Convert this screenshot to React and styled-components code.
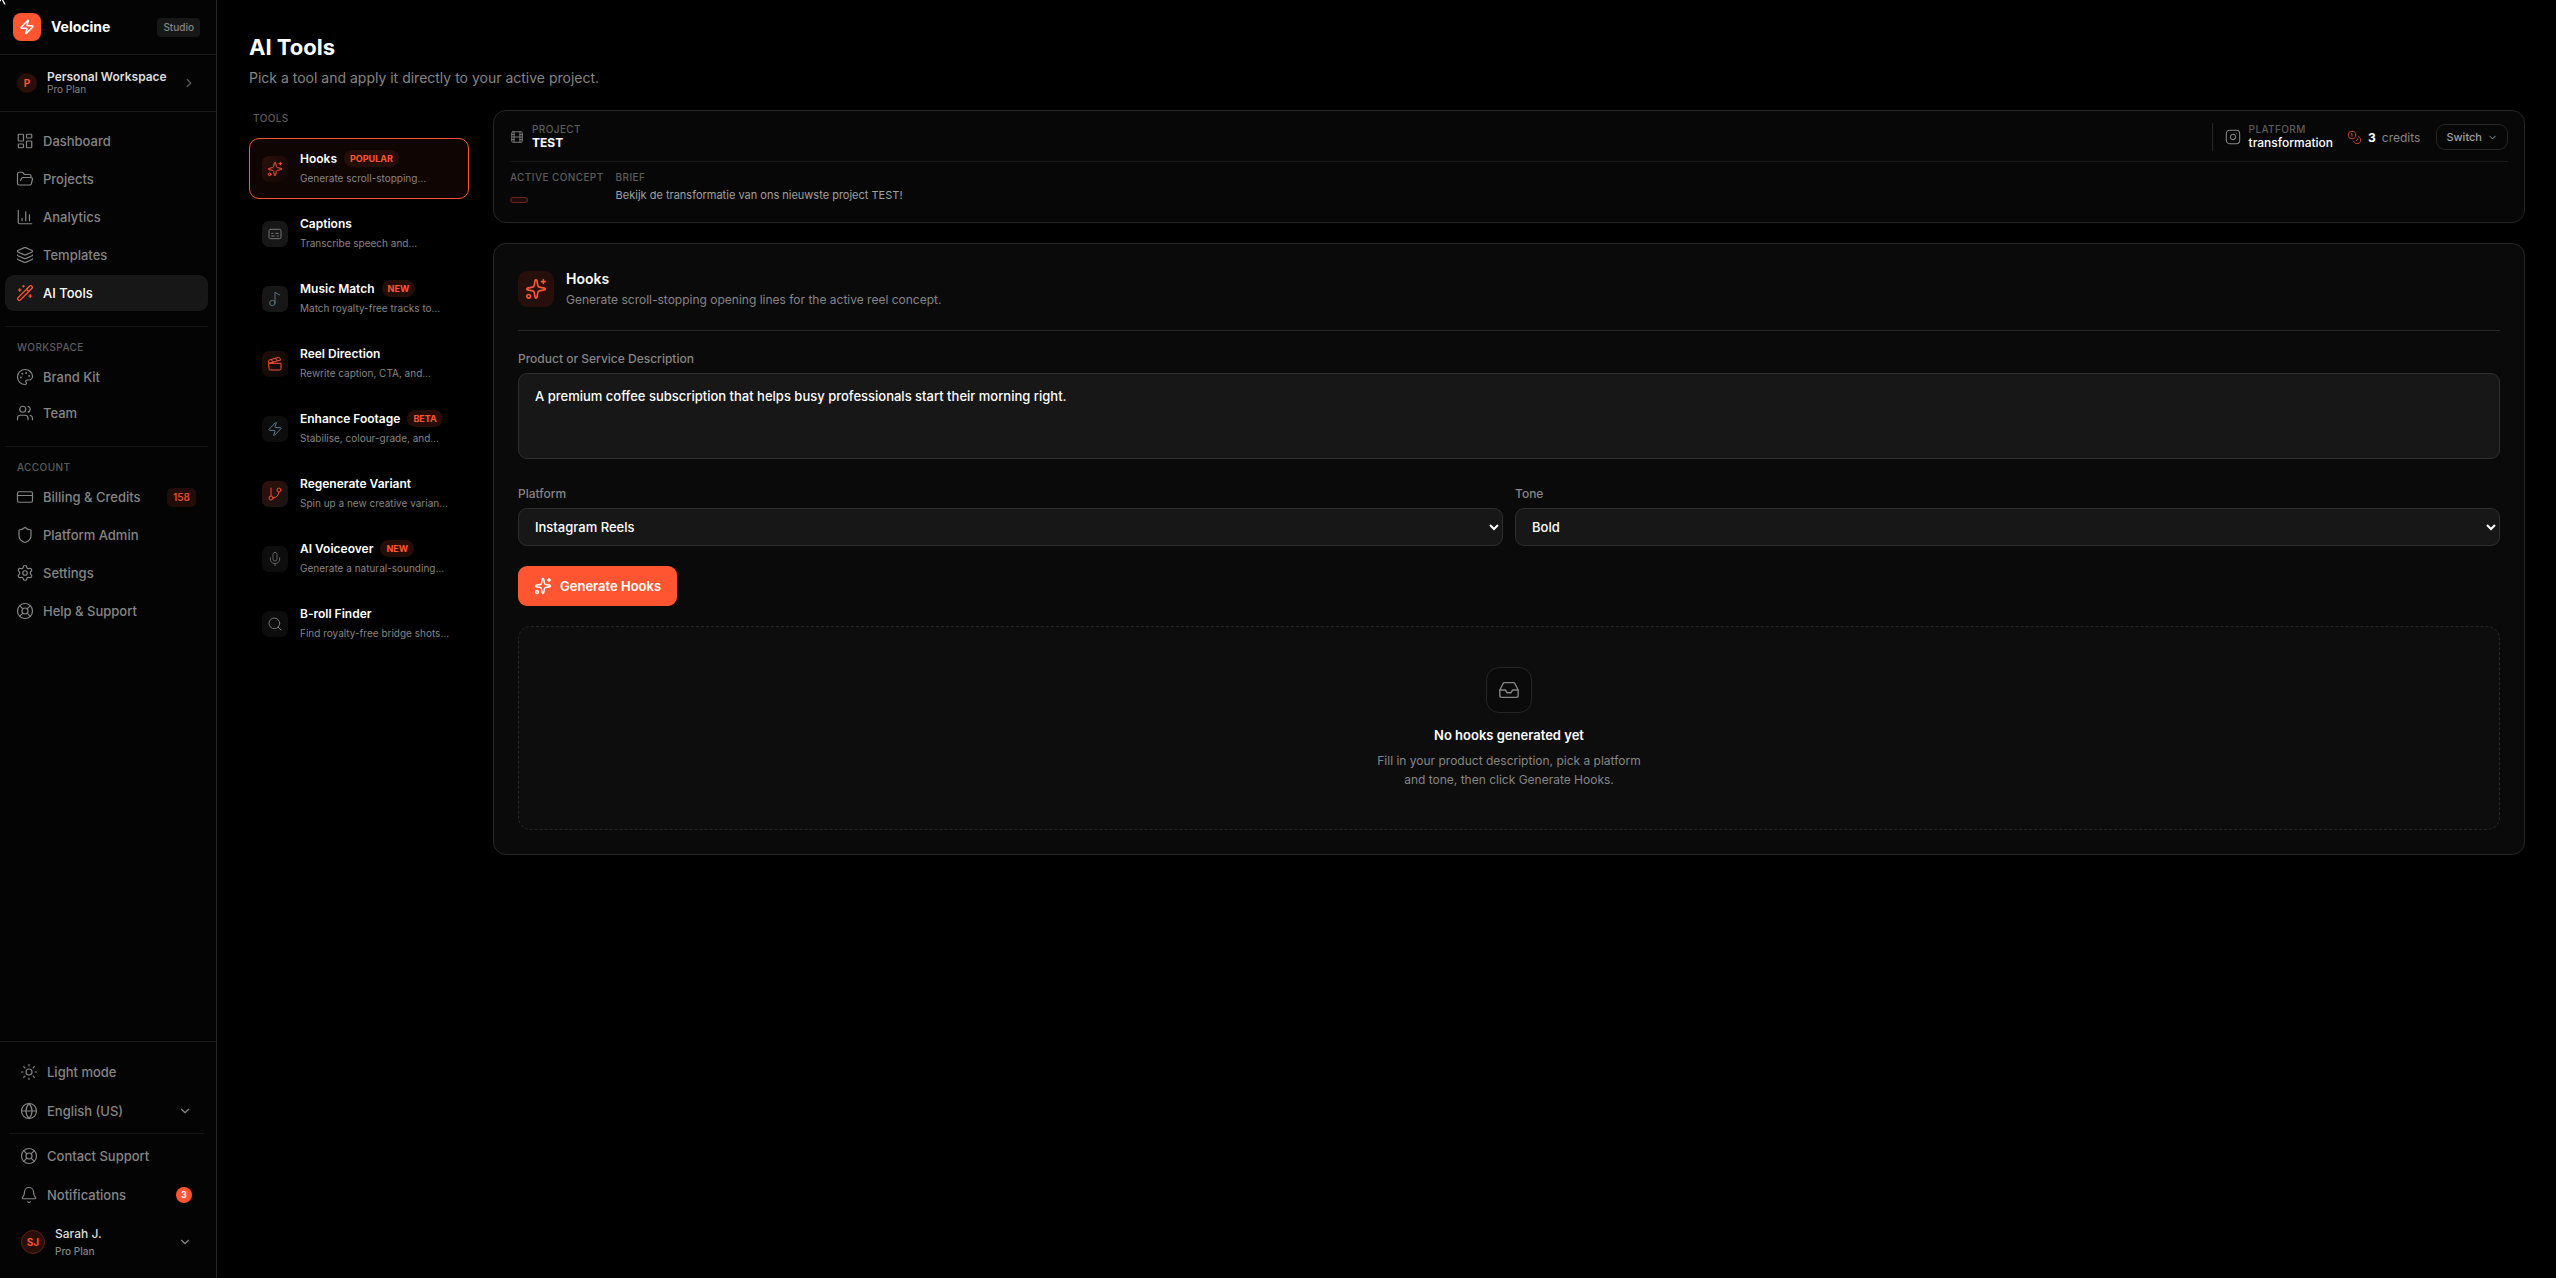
import React from "react";
import styled, { createGlobalStyle, css } from "styled-components";
import {
  Zap, ChevronRight, ChevronDown, LayoutDashboard, FolderOpen, ChartColumn, Layers,
  WandSparkles, Palette, Users, CreditCard, Shield, Settings, LifeBuoy, Sun, Globe,
  Bell, Sparkles, Captions, Music2, Clapperboard, GitBranch, Mic, Search, Film,
  Instagram, Coins, Inbox,
} from "lucide-react";

const c = {
  accent: "#ff5530",
  line: "#262626",
  faint: "#161616",
  raised: "#171717",
  text: "#ffffff",
  muted: "#858585",
  dim: "#5c5c5c",
};

const GlobalStyle = createGlobalStyle`
  *, *::before, *::after { box-sizing: border-box; }
  body {
    margin: 0;
    background: #000;
    color: ${c.text};
    font-family: Inter, "Noto Sans", sans-serif;
    font-size: 13px;
  }
  button, textarea, select { font: inherit; color: inherit; margin: 0; }
  button { background: none; border: 0; padding: 0; text-align: left; cursor: pointer; }
  a { color: inherit; text-decoration: none; }
  h1, h2, h3, p, ul { margin: 0; padding: 0; }
  ul { list-style: none; }
  svg { flex-shrink: 0; display: block; }
`;

const Shell = styled.div`
  display: flex;
  min-height: 100vh;
`;

const Pointer = styled.svg`
  position: absolute;
  left: 0;
  top: 0;
`;

/* Sidebar */

const Sidebar = styled.aside`
  display: flex;
  flex-direction: column;
  width: 217px;
  flex-shrink: 0;
  background: #040404;
  border-right: 1px solid ${c.line};
`;

const BrandBar = styled.div`
  display: flex;
  align-items: center;
  gap: 10px;
  height: 55px;
  padding: 0 16px 0 13px;
  border-bottom: 1px solid #1c1c1c;
`;

const Logo = styled.span`
  display: grid;
  place-items: center;
  width: 28px;
  height: 28px;
  border-radius: 8px;
  background: ${c.accent};
`;

const BrandName = styled.span`
  flex: 1;
  padding-bottom: 2px;
  font-size: 14px;
  font-weight: 700;
`;

const PlanTag = styled.span`
  padding: 0 6px;
  border-radius: 4px;
  background: ${c.raised};
  color: ${c.muted};
  font-size: 10px;
  font-weight: 500;
  line-height: 19px;
`;

const WorkspaceButton = styled.button`
  display: flex;
  align-items: center;
  gap: 10px;
  height: 57px;
  padding: 0 20px 0 17px;
  border-bottom: 1px solid #1c1c1c;
  color: ${c.dim};
`;

const Avatar = styled.span`
  display: grid;
  place-items: center;
  width: ${(p) => p.$size}px;
  height: ${(p) => p.$size}px;
  border-radius: 50%;
  border: ${(p) => (p.$ring ? "1px solid #5c2114" : "0")};
  background: #2a0f09;
  color: ${c.accent};
  font-size: 10px;
  font-weight: 700;
`;

const Stack = styled.span`
  display: flex;
  flex-direction: column;
  flex: 1;
  min-width: 0;
`;

const PersonName = styled.span`
  color: #dcdcdc;
  font-size: 12px;
  font-weight: ${(p) => (p.$strong ? 600 : 500)};
  line-height: ${(p) => (p.$strong ? 12 : 18)}px;
  white-space: nowrap;
`;

const PersonPlan = styled.span`
  color: ${c.muted};
  font-size: 10px;
  line-height: ${(p) => (p.$strong ? 13 : 16)}px;
`;

const Nav = styled.nav`
  flex: 1;
  padding: 11px 8px 0 5px;
`;

const NavList = styled.ul`
  display: flex;
  flex-direction: column;
  gap: ${(p) => (p.$dense ? 0 : 2)}px;
`;

const NavHeading = styled.h2`
  margin: 15px 0 4px;
  padding: 12px 12px 0;
  border-top: 1px solid ${c.faint};
  color: ${c.dim};
  font-size: 10px;
  font-weight: 500;
  letter-spacing: 0.04em;
  line-height: 16px;
  text-transform: uppercase;
`;

const rowStyle = css`
  display: flex;
  align-items: center;
  gap: 9px;
  width: 100%;
  height: 36px;
  padding: 0 12px 0 11px;
  border-radius: 9px;
  color: ${c.muted};
  font-weight: 500;
`;

const NavLink = styled.a`
  ${rowStyle}
  ${(p) =>
    p.$active &&
    css`
      background: ${c.raised};
      color: ${c.text};
      svg { color: ${c.accent}; }
    `}
`;

const RowButton = styled.button`
  ${rowStyle}
  height: ${(p) => (p.$tall ? 52 : 36)}px;
  ${(p) => p.$tall && "padding-left: 12px; gap: 10px;"}
`;

const Grow = styled.span`
  flex: 1;
`;

const CreditCount = styled.span`
  padding: 0 6px;
  border-radius: 5px;
  background: #210c07;
  color: #e04a2a;
  font-size: 10px;
  font-weight: 600;
  line-height: 19px;
`;

const AlertCount = styled.span`
  width: 16px;
  border-radius: 8px;
  background: ${c.accent};
  color: #fff;
  font-size: 9px;
  font-weight: 700;
  line-height: 16px;
  text-align: center;
`;

const Footer = styled.div`
  padding: 12px 12px 10px 9px;
  border-top: 1px solid #1c1c1c;
`;

const FooterGroup = styled.div`
  display: flex;
  flex-direction: column;
  gap: 3px;
  & + & {
    margin-top: 4px;
    padding-top: 4px;
    border-top: 1px solid ${c.faint};
  }
`;

/* Main column */

const Main = styled.main`
  flex: 1;
  min-width: 0;
  padding: 32px 31px 32px 32px;
`;

const PageTitle = styled.h1`
  font-size: 22px;
  font-weight: 700;
  line-height: 30px;
`;

const PageLead = styled.p`
  margin-top: 6px;
  color: ${c.muted};
  font-size: 14px;
  line-height: 20px;
`;

const Columns = styled.div`
  display: grid;
  grid-template-columns: 220px minmax(0, 1fr);
  align-items: start;
  gap: 24px;
  margin-top: 22px;
`;

const ListTitle = styled.h2`
  padding-left: 4px;
  margin-bottom: 12px;
  color: ${c.dim};
  font-size: 10px;
  font-weight: 500;
  letter-spacing: 0.04em;
  line-height: 16px;
  text-transform: uppercase;
`;

const ToolList = styled.div`
  display: flex;
  flex-direction: column;
  gap: 4px;
`;

const ToolCard = styled.button`
  display: flex;
  align-items: center;
  gap: 12px;
  height: 61px;
  padding: 0 12px;
  border: 1px solid ${(p) => (p.$active ? c.accent : "transparent")};
  border-radius: 10px;
  background: ${(p) => (p.$active ? "#0f0503" : "none")};
`;

const tones = {
  accent: "linear-gradient(135deg, #30100a, #0d0605)",
  warm: "linear-gradient(135deg, #220d08, #0a0909)",
  ember: "linear-gradient(135deg, #32110a, #191313)",
  grey: "#171717",
  dark: "#0d0d0d",
};

const ToolTile = styled.span`
  display: grid;
  place-items: center;
  width: 26px;
  height: 26px;
  border-radius: 7px;
  background: ${(p) => tones[p.$tone]};
  color: ${(p) => p.$ink};
`;

const ToolCopy = styled(Stack)`
  padding-bottom: 2px;
`;

const ToolName = styled.span`
  display: flex;
  align-items: center;
  gap: 7px;
  font-size: 12px;
  font-weight: 600;
  line-height: 18px;
  white-space: nowrap;
`;

const ToolBadge = styled.span`
  padding: 0 6px;
  border-radius: 9px;
  background: #260e08;
  color: ${c.accent};
  font-size: 9px;
  font-weight: 700;
  line-height: 17px;
`;

const ToolText = styled.span`
  margin-top: 2px;
  color: ${c.muted};
  font-size: 10px;
  line-height: 16px;
  white-space: nowrap;
`;

const Panels = styled.div`
  display: flex;
  flex-direction: column;
  gap: 20px;
`;

const Context = styled.section`
  padding: 12px 16px 17px;
  border: 1px solid ${c.line};
  border-radius: 13px;
  background: #070707;
`;

const ContextTop = styled.div`
  display: flex;
  align-items: center;
  padding-bottom: 10px;
  border-bottom: 1px solid #191919;
`;

const Fact = styled.div`
  display: flex;
  align-items: center;
  gap: 8px;
  height: 28px;
  color: ${c.muted};
  ${(p) =>
    p.$split &&
    css`
      margin-left: auto;
      padding-left: 12px;
      border-left: 1px solid ${c.line};
    `}
`;

const Caption = styled.span`
  color: ${c.dim};
  font-size: 10px;
  font-weight: 500;
  letter-spacing: 0.04em;
  line-height: ${(p) => (p.$snug ? 12 : 16)}px;
  text-transform: uppercase;
`;

const FactValue = styled.span`
  color: ${c.text};
  font-size: 12px;
  font-weight: ${(p) => (p.$strong ? 700 : 500)};
  line-height: 16px;
`;

const CreditsLeft = styled.span`
  display: flex;
  align-items: center;
  gap: 6px;
  margin: 0 16px 0 14px;
  color: ${c.muted};
  font-size: 12px;
  strong { color: ${c.text}; font-weight: 700; }
  svg { color: #c04a22; }
`;

const SwitchButton = styled.button`
  display: flex;
  align-items: center;
  gap: 5px;
  height: 26px;
  padding: 0 9px;
  border: 1px solid ${c.line};
  border-radius: 9px;
  color: #a0a0a0;
  font-size: 11px;
  font-weight: 500;
`;

const ContextDetail = styled.div`
  display: flex;
  gap: 12px;
  padding-top: 7px;
`;

const Detail = styled.div`
  display: flex;
  flex-direction: column;
`;

const ConceptPill = styled.span`
  width: 18px;
  height: 6px;
  margin-top: 12px;
  border: 1px solid #6b2515;
  border-radius: 3px;
  background: #210c07;
`;

const Brief = styled.p`
  color: #a0a0a0;
  font-size: 11px;
  line-height: 20px;
`;

const Workbench = styled.section`
  padding: 24px;
  border: 1px solid ${c.line};
  border-radius: 13px;
  background: #0a0a0a;
`;

const BenchHead = styled.header`
  display: flex;
  align-items: center;
  gap: 12px;
  padding-bottom: 20px;
  border-bottom: 1px solid ${c.line};
`;

const BenchIcon = styled.span`
  display: grid;
  place-items: center;
  width: 36px;
  height: 36px;
  border-radius: 9px;
  background: #27100b;
  color: ${c.accent};
`;

const BenchTitle = styled.h2`
  font-size: 14px;
  font-weight: 600;
  line-height: 22px;
`;

const BenchText = styled.p`
  color: ${c.muted};
  font-size: 12px;
  line-height: 20px;
`;

const Form = styled.form`
  display: flex;
  flex-direction: column;
  align-items: flex-start;
  gap: 20px;
  padding-top: 20px;
`;

const Field = styled.label`
  display: flex;
  flex-direction: column;
  gap: 6px;
  width: 100%;
  min-width: 0;
  color: ${c.muted};
  font-size: 12px;
  font-weight: 500;
  line-height: 16px;
`;

const controlStyle = css`
  width: 100%;
  border: 1px solid #2e2e2e;
  border-radius: 9px;
  background: ${c.raised};
  color: ${c.text};
  font-size: 13px;
  outline: 0;
`;

const TextArea = styled.textarea`
  ${controlStyle}
  display: block;
  height: 86px;
  margin-bottom: 7px;
  padding: 12px 16px;
  line-height: 20px;
  resize: none;
`;

const Select = styled.select`
  ${controlStyle}
  height: 38px;
  padding: 0 12px;
`;

const Pair = styled.div`
  display: grid;
  grid-template-columns: 1fr 1fr;
  gap: 12px;
  width: 100%;
`;

const Submit = styled.button`
  display: flex;
  align-items: center;
  gap: 8px;
  height: 40px;
  padding: 0 16px;
  border-radius: 9px;
  background: ${c.accent};
  color: #fff;
  font-size: 13px;
  font-weight: 600;
`;

const Empty = styled.div`
  display: flex;
  flex-direction: column;
  align-items: center;
  margin-top: 20px;
  padding: 40px 20px;
  border: 1px dashed #262626;
  border-radius: 13px;
  background: #0d0d0d;
`;

const EmptyIcon = styled.span`
  display: grid;
  place-items: center;
  width: 46px;
  height: 46px;
  border: 1px solid ${c.line};
  border-radius: 13px;
  background: #0a0a0a;
  color: ${c.muted};
`;

const EmptyTitle = styled.h3`
  margin-top: 12px;
  font-size: 13px;
  font-weight: 600;
  line-height: 20px;
`;

const EmptyText = styled.p`
  max-width: 280px;
  margin-top: 6px;
  color: ${c.muted};
  font-size: 12px;
  line-height: 19px;
  text-align: center;
`;

const mainNav = [
  { icon: LayoutDashboard, label: "Dashboard" },
  { icon: FolderOpen, label: "Projects" },
  { icon: ChartColumn, label: "Analytics" },
  { icon: Layers, label: "Templates" },
  { icon: WandSparkles, label: "AI Tools", active: true },
];
const workspaceNav = [
  { icon: Palette, label: "Brand Kit" },
  { icon: Users, label: "Team" },
];
const accountNav = [
  { icon: CreditCard, label: "Billing & Credits", count: 158 },
  { icon: Shield, label: "Platform Admin" },
  { icon: Settings, label: "Settings" },
  { icon: LifeBuoy, label: "Help & Support" },
];

const tools = [
  { icon: Sparkles, name: "Hooks", badge: "POPULAR", text: "Generate scroll-stopping…", tone: "accent", ink: c.accent, active: true },
  { icon: Captions, name: "Captions", text: "Transcribe speech and…", tone: "grey", ink: "#777" },
  { icon: Music2, name: "Music Match", badge: "NEW", text: "Match royalty-free tracks to…", tone: "grey", ink: "#56727e" },
  { icon: Clapperboard, name: "Reel Direction", text: "Rewrite caption, CTA, and…", tone: "warm", ink: c.accent },
  { icon: Zap, name: "Enhance Footage", badge: "BETA", text: "Stabilise, colour-grade, and…", tone: "dark", ink: "#5b7f94" },
  { icon: GitBranch, name: "Regenerate Variant", text: "Spin up a new creative varian…", tone: "ember", ink: "#ee4f2c" },
  { icon: Mic, name: "AI Voiceover", badge: "NEW", text: "Generate a natural-sounding…", tone: "dark", ink: "#606060" },
  { icon: Search, name: "B-roll Finder", text: "Find royalty-free bridge shots…", tone: "dark", ink: "#777" },
];

function NavItems({ items, dense }) {
  return (
    <NavList $dense={dense}>
      {items.map(({ icon: Icon, label, count, active }) => (
        <li key={label}>
          <NavLink href="#" $active={active} aria-current={active ? "page" : undefined}>
            <Icon size={18} strokeWidth={1.6} />
            <Grow>{label}</Grow>
            {count && <CreditCount>{count}</CreditCount>}
          </NavLink>
        </li>
      ))}
    </NavList>
  );
}

export default function App() {
  return (
    <>
      <GlobalStyle />
      <Shell>
        <Pointer width="8" height="6" viewBox="0 0 8 6" aria-hidden="true">
          <path d="M0 0.5h1M2.5 0l2.5 4.5" stroke="#fff" strokeWidth="1.4" fill="none" />
        </Pointer>
        <Sidebar>
          <BrandBar>
            <Logo><Zap size={16} strokeWidth={2.3} /></Logo>
            <BrandName>Velocine</BrandName>
            <PlanTag>Studio</PlanTag>
          </BrandBar>
          <WorkspaceButton type="button">
            <Avatar $size={20}>P</Avatar>
            <Stack>
              <PersonName $strong>Personal Workspace</PersonName>
              <PersonPlan $strong>Pro Plan</PersonPlan>
            </Stack>
            <ChevronRight size={14} strokeWidth={2} />
          </WorkspaceButton>
          <Nav>
            <NavItems items={mainNav} />
            <NavHeading>Workspace</NavHeading>
            <NavItems items={workspaceNav} dense />
            <NavHeading>Account</NavHeading>
            <NavItems items={accountNav} />
          </Nav>
          <Footer>
            <FooterGroup>
              <RowButton type="button">
                <Sun size={18} strokeWidth={1.6} />
                <Grow>Light mode</Grow>
              </RowButton>
              <RowButton type="button">
                <Globe size={18} strokeWidth={1.6} />
                <Grow>English (US)</Grow>
                <ChevronDown size={14} />
              </RowButton>
            </FooterGroup>
            <FooterGroup>
              <RowButton type="button">
                <LifeBuoy size={18} strokeWidth={1.6} />
                <Grow>Contact Support</Grow>
              </RowButton>
              <RowButton type="button">
                <Bell size={18} strokeWidth={1.6} />
                <Grow>Notifications</Grow>
                <AlertCount>3</AlertCount>
              </RowButton>
              <RowButton type="button" $tall>
                <Avatar $size={24} $ring>SJ</Avatar>
                <Stack>
                  <PersonName>Sarah J.</PersonName>
                  <PersonPlan>Pro Plan</PersonPlan>
                </Stack>
                <ChevronDown size={14} />
              </RowButton>
            </FooterGroup>
          </Footer>
        </Sidebar>

        <Main>
          <PageTitle>AI Tools</PageTitle>
          <PageLead>Pick a tool and apply it directly to your active project.</PageLead>
          <Columns>
            <div>
              <ListTitle>Tools</ListTitle>
              <ToolList>
                {tools.map(({ icon: Icon, name, badge, text, tone, ink, active }) => (
                  <ToolCard key={name} type="button" $active={active}>
                    <ToolTile $tone={tone} $ink={ink}><Icon size={16} strokeWidth={1.5} /></ToolTile>
                    <ToolCopy>
                      <ToolName>
                        {name}
                        {badge && <ToolBadge>{badge}</ToolBadge>}
                      </ToolName>
                      <ToolText>{text}</ToolText>
                    </ToolCopy>
                  </ToolCard>
                ))}
              </ToolList>
            </div>

            <Panels>
              <Context>
                <ContextTop>
                  <Fact>
                    <Film size={14} strokeWidth={1.5} />
                    <Stack>
                      <Caption $snug>Project</Caption>
                      <FactValue $strong>TEST</FactValue>
                    </Stack>
                  </Fact>
                  <Fact $split>
                    <Instagram size={16} strokeWidth={1.6} />
                    <Stack>
                      <Caption $snug>Platform</Caption>
                      <FactValue>transformation</FactValue>
                    </Stack>
                  </Fact>
                  <CreditsLeft>
                    <Coins size={15} strokeWidth={1.6} />
                    <strong>3</strong> credits
                  </CreditsLeft>
                  <SwitchButton type="button">
                    Switch
                    <ChevronDown size={11} />
                  </SwitchButton>
                </ContextTop>
                <ContextDetail>
                  <Detail>
                    <Caption>Active concept</Caption>
                    <ConceptPill />
                  </Detail>
                  <Detail>
                    <Caption>Brief</Caption>
                    <Brief>Bekijk de transformatie van ons nieuwste project TEST!</Brief>
                  </Detail>
                </ContextDetail>
              </Context>

              <Workbench>
                <BenchHead>
                  <BenchIcon><Sparkles size={22} strokeWidth={1.8} /></BenchIcon>
                  <div>
                    <BenchTitle>Hooks</BenchTitle>
                    <BenchText>Generate scroll-stopping opening lines for the active reel concept.</BenchText>
                  </div>
                </BenchHead>
                <Form onSubmit={(e) => e.preventDefault()}>
                  <Field>
                    Product or Service Description
                    <TextArea defaultValue="A premium coffee subscription that helps busy professionals start their morning right." />
                  </Field>
                  <Pair>
                    <Field>
                      Platform
                      <Select defaultValue="Instagram Reels">
                        <option>Instagram Reels</option>
                      </Select>
                    </Field>
                    <Field>
                      Tone
                      <Select defaultValue="Bold">
                        <option>Bold</option>
                      </Select>
                    </Field>
                  </Pair>
                  <Submit type="submit">
                    <Sparkles size={18} strokeWidth={1.8} />
                    Generate Hooks
                  </Submit>
                </Form>
                <Empty>
                  <EmptyIcon><Inbox size={22} strokeWidth={1.5} /></EmptyIcon>
                  <EmptyTitle>No hooks generated yet</EmptyTitle>
                  <EmptyText>
                    Fill in your product description, pick a platform and tone, then click Generate Hooks.
                  </EmptyText>
                </Empty>
              </Workbench>
            </Panels>
          </Columns>
        </Main>
      </Shell>
    </>
  );
}
